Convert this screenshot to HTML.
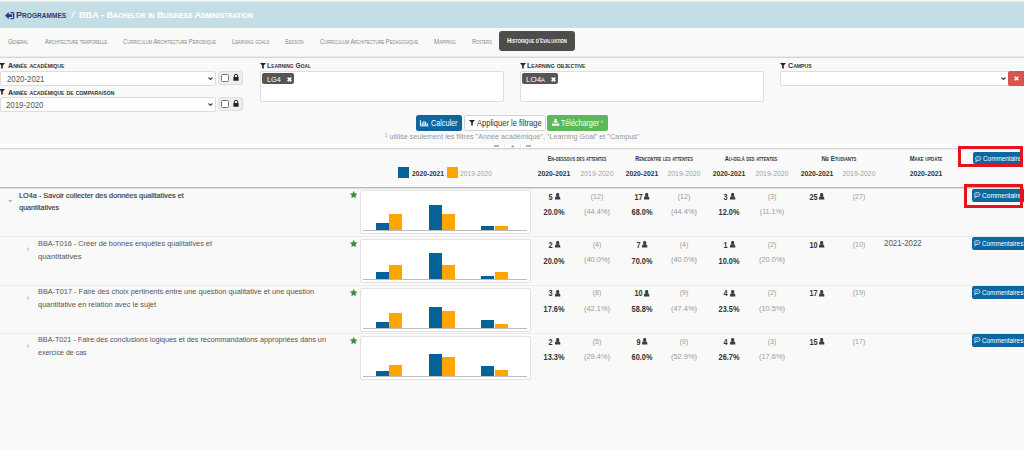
<!DOCTYPE html><html><head><meta charset="utf-8"><style>
*{box-sizing:border-box;margin:0;padding:0}
html,body{width:1024px;height:450px;overflow:hidden;background:#f9f9f9;font-family:"Liberation Sans",sans-serif;color:#555}
.a{position:absolute;white-space:nowrap;line-height:1}
svg{position:absolute;overflow:visible}
</style></head><body><div style="position:absolute;left:0px;top:0px;width:1024px;height:1px;background:#fafafa"></div>
<div style="position:absolute;left:0px;top:1px;width:1024px;height:1px;background:#dfe6e8"></div>
<div style="position:absolute;left:0px;top:2px;width:1024px;height:25.6px;background:#c3dee5"></div>
<svg style="left:4.9px;top:11.8px" width="9.3" height="7.2" viewBox="0 0 9.3 7.2"><path d="M0 3.6 L3.8 0 V2.3 H7.2 V4.9 H3.8 V7.2 Z" fill="#27398a"/><path d="M5.6 0.65 H7.9 Q8.65 0.65 8.65 1.4 V5.8 Q8.65 6.55 7.9 6.55 H5.6" fill="none" stroke="#27398a" stroke-width="1.3"/></svg>
<div class="a" id="t0" style="left:16.00px;top:11.40px;font-size:9.163px;font-weight:700;color:#27398a;transform:scaleX(0.9966);transform-origin:0 0">P<span style="font-size:6.597px">ROGRAMMES</span></div>
<div class="a" id="t1" style="left:71.39px;top:11.41px;font-size:9.350px;font-weight:400;color:#fff;transform:scaleX(1.5558);transform-origin:0 0">/</div>
<div class="a" id="t2" style="left:78.51px;top:11.40px;font-size:9.016px;font-weight:700;color:#fff;-webkit-text-stroke:0.12px #fff;transform:scaleX(1.0099);transform-origin:0 0">BBA - B<span style="font-size:6.492px">ACHELOR</span> <span style="font-size:6.492px">IN</span> B<span style="font-size:6.492px">USINESS</span> A<span style="font-size:6.492px">DMINISTRATION</span></div>
<div style="position:absolute;left:0px;top:56px;width:1024px;height:1px;background:#ebebeb"></div>
<div style="position:absolute;left:0px;top:57px;width:1024px;height:1px;background:#d6d6d6"></div>
<div class="a" id="t3" style="left:8.00px;top:38.51px;font-size:6.786px;color:#858585;transform:scaleX(0.8147);transform-origin:0 0">G<span style="font-size:4.886px">ENERAL</span></div>
<div class="a" id="t4" style="left:44.51px;top:38.51px;font-size:6.786px;color:#858585;transform:scaleX(0.8412);transform-origin:0 0">A<span style="font-size:4.886px">RCHITECTURE</span> <span style="font-size:4.886px">TEMPORELLE</span></div>
<div class="a" id="t5" style="left:122.51px;top:38.51px;font-size:6.786px;color:#858585;transform:scaleX(0.8548);transform-origin:0 0">C<span style="font-size:4.886px">URRICULUM</span> A<span style="font-size:4.886px">RCHITECTURE</span> P<span style="font-size:4.886px">ERIODIQUE</span></div>
<div class="a" id="t6" style="left:231.50px;top:38.51px;font-size:6.786px;color:#858585;transform:scaleX(0.8325);transform-origin:0 0">L<span style="font-size:4.886px">EARNING</span> <span style="font-size:4.886px">GOALS</span></div>
<div class="a" id="t7" style="left:285.24px;top:38.51px;font-size:6.786px;color:#858585;transform:scaleX(0.8097);transform-origin:0 0">S<span style="font-size:4.886px">ESSION</span></div>
<div class="a" id="t8" style="left:319.75px;top:38.51px;font-size:6.786px;color:#858585;transform:scaleX(0.8547);transform-origin:0 0">C<span style="font-size:4.886px">URRICULUM</span> A<span style="font-size:4.886px">RCHITECTURE</span> P<span style="font-size:4.886px">EDAGOGIQUE</span></div>
<div class="a" id="t9" style="left:434.00px;top:38.51px;font-size:6.786px;color:#858585;transform:scaleX(0.8982);transform-origin:0 0">M<span style="font-size:4.886px">APPING</span></div>
<div class="a" id="t10" style="left:471.51px;top:38.51px;font-size:6.786px;color:#858585;transform:scaleX(0.7903);transform-origin:0 0">R<span style="font-size:4.886px">OSTERS</span></div>
<div style="position:absolute;left:499.3px;top:31.2px;width:75.5px;height:20.3px;background:#4d4d4d;border-radius:3px"></div>
<div class="a" id="t11" style="left:507.00px;top:38.31px;font-size:6.844px;font-weight:700;color:#fff;transform:scaleX(0.8547);transform-origin:0 0">H<span style="font-size:4.928px">ISTORIQUE</span> <span style="font-size:4.928px">D</span>'<span style="font-size:4.928px">ÉVALUATION</span></div>
<svg style="left:-1.0px;top:63.0px" width="6" height="5.5" viewBox="0 0 6 5.5"><path d="M0 0 H6 L3.8 2.4 V5.5 H2.2 V2.4 Z" fill="#222"/></svg>
<div class="a" id="t12" style="left:8.01px;top:62.41px;font-size:7.592px;font-weight:700;color:#333;transform:scaleX(0.9414);transform-origin:0 0">A<span style="font-size:5.466px">NNÉE</span> <span style="font-size:5.466px">ACADÉMIQUE</span></div>
<div style="position:absolute;left:0px;top:71.2px;width:216px;height:15px;background:#fff;border:1px solid #ddd;border-radius:2px"></div>
<div class="a" id="t13" style="left:6.50px;top:74.61px;font-size:8.736px;color:#555;transform:scaleX(0.8979);transform-origin:0 0">2020-2021</div>
<svg style="left:208.2px;top:76.6px" width="5" height="3.2" viewBox="0 0 5 3.2"><path d="M0.5 0.5 L2.5 2.5 L4.5 0.5" fill="none" stroke="#444" stroke-width="1.1"/></svg>
<div style="position:absolute;left:218.3px;top:71px;width:25.1px;height:13.5px;background:#eee;border:1px solid #ddd;border-radius:3px"></div>
<div style="position:absolute;left:221px;top:74.2px;width:8px;height:7.7px;background:#fff;border:1px solid #777;border-radius:1.5px"></div>
<svg style="left:233.3px;top:73.8px" width="6" height="7" viewBox="0 0 6 7"><path d="M1.3 3 V2 A1.7 1.7 0 0 1 4.7 2 V3" fill="none" stroke="#222" stroke-width="1"/><rect x="0.4" y="3" width="5.2" height="3.8" rx="0.5" fill="#222"/></svg>
<svg style="left:-1.0px;top:89.4px" width="6" height="5.5" viewBox="0 0 6 5.5"><path d="M0 0 H6 L3.8 2.4 V5.5 H2.2 V2.4 Z" fill="#222"/></svg>
<div class="a" id="t14" style="left:8.01px;top:88.70px;font-size:7.592px;font-weight:700;color:#333;transform:scaleX(0.9420);transform-origin:0 0">A<span style="font-size:5.466px">NNÉE</span> <span style="font-size:5.466px">ACADÉMIQUE</span> <span style="font-size:5.466px">DE</span> <span style="font-size:5.466px">COMPARAISON</span></div>
<div style="position:absolute;left:0px;top:97.3px;width:216px;height:15px;background:#fff;border:1px solid #ddd;border-radius:2px"></div>
<div class="a" id="t15" style="left:6.49px;top:100.81px;font-size:8.736px;color:#555;transform:scaleX(0.8979);transform-origin:0 0">2019-2020</div>
<svg style="left:208.2px;top:102.6px" width="5" height="3.2" viewBox="0 0 5 3.2"><path d="M0.5 0.5 L2.5 2.5 L4.5 0.5" fill="none" stroke="#444" stroke-width="1.1"/></svg>
<div style="position:absolute;left:218.3px;top:97.3px;width:25.1px;height:13.5px;background:#eee;border:1px solid #ddd;border-radius:3px"></div>
<div style="position:absolute;left:221px;top:100.4px;width:8px;height:7.7px;background:#fff;border:1px solid #777;border-radius:1.5px"></div>
<svg style="left:233.3px;top:100px" width="6" height="7" viewBox="0 0 6 7"><path d="M1.3 3 V2 A1.7 1.7 0 0 1 4.7 2 V3" fill="none" stroke="#222" stroke-width="1"/><rect x="0.4" y="3" width="5.2" height="3.8" rx="0.5" fill="#222"/></svg>
<svg style="left:260px;top:63px" width="6" height="5.5" viewBox="0 0 6 5.5"><path d="M0 0 H6 L3.8 2.4 V5.5 H2.2 V2.4 Z" fill="#222"/></svg>
<div class="a" id="t16" style="left:267.48px;top:61.91px;font-size:7.592px;font-weight:700;color:#333;transform:scaleX(0.8920);transform-origin:0 0">L<span style="font-size:5.466px">EARNING</span> G<span style="font-size:5.466px">OAL</span></div>
<div style="position:absolute;left:259.8px;top:71px;width:244px;height:31px;background:#fff;border:1px solid #ddd;border-radius:2px"></div>
<div style="position:absolute;left:261.9px;top:73.1px;width:32px;height:11.4px;background:#555;border-radius:2px"></div>
<div class="a" id="t17" style="left:267.49px;top:75.82px;font-size:8.064px;color:#fff;transform:scaleX(0.9083);transform-origin:0 0">LG4</div>
<svg style="left:287.2px;top:76.6px" width="5" height="5" viewBox="0 0 5 5"><path d="M0.7 0.7 L4.3 4.3 M4.3 0.7 L0.7 4.3" stroke="#fff" stroke-width="1.7"/></svg>
<svg style="left:520.2px;top:63px" width="6" height="5.5" viewBox="0 0 6 5.5"><path d="M0 0 H6 L3.8 2.4 V5.5 H2.2 V2.4 Z" fill="#222"/></svg>
<div class="a" id="t18" style="left:527.00px;top:61.91px;font-size:7.592px;font-weight:700;color:#333;transform:scaleX(0.9296);transform-origin:0 0">L<span style="font-size:5.466px">EARNING</span> <span style="font-size:5.466px">OBJECTIVE</span></div>
<div style="position:absolute;left:520px;top:71px;width:243.8px;height:31px;background:#fff;border:1px solid #ddd;border-radius:2px"></div>
<div style="position:absolute;left:521.9px;top:73.1px;width:36.5px;height:11.4px;background:#555;border-radius:2px"></div>
<div class="a" id="t19" style="left:526.43px;top:75.82px;font-size:8.064px;color:#fff;transform:scaleX(0.9910);transform-origin:0 0">LO4<span style="font-size:5.806px">A</span></div>
<svg style="left:551.2px;top:76.6px" width="5" height="5" viewBox="0 0 5 5"><path d="M0.7 0.7 L4.3 4.3 M4.3 0.7 L0.7 4.3" stroke="#fff" stroke-width="1.7"/></svg>
<svg style="left:780px;top:62.8px" width="6" height="5.5" viewBox="0 0 6 5.5"><path d="M0 0 H6 L3.8 2.4 V5.5 H2.2 V2.4 Z" fill="#222"/></svg>
<div class="a" id="t20" style="left:787.50px;top:61.91px;font-size:7.592px;font-weight:700;color:#333;transform:scaleX(0.9376);transform-origin:0 0">C<span style="font-size:5.466px">AMPUS</span></div>
<div style="position:absolute;left:780.2px;top:71.3px;width:230px;height:14.9px;background:#fff;border:1px solid #ddd;border-radius:2px 0 0 2px"></div>
<svg style="left:1000.6px;top:77px" width="5" height="3.2" viewBox="0 0 5 3.2"><path d="M0.5 0.5 L2.5 2.5 L4.5 0.5" fill="none" stroke="#444" stroke-width="1.1"/></svg>
<div style="position:absolute;left:1008.2px;top:71px;width:16px;height:15.1px;background:#d9534f;border-radius:2px 0 0 2px"></div>
<svg style="left:1013.6px;top:76px" width="5" height="5" viewBox="0 0 5 5"><path d="M0.7 0.7 L4.3 4.3 M4.3 0.7 L0.7 4.3" stroke="#fff" stroke-width="1.5"/></svg>
<div style="position:absolute;left:416px;top:115.3px;width:46px;height:15.3px;background:#0c67a0;border-radius:2.5px"></div>
<svg style="left:420px;top:119.5px" width="8.6" height="6.3" viewBox="0 0 8.6 6.3"><path d="M0.45 0 V5.85 H8.6" fill="none" stroke="#fff" stroke-width="0.9"/><rect x="1.7" y="2.4" width="1.1" height="3.1" fill="#fff"/><rect x="3.4" y="0.9" width="1.1" height="4.6" fill="#fff"/><rect x="5.1" y="1.8" width="1.1" height="3.7" fill="#fff"/><rect x="6.8" y="3.3" width="1.1" height="2.2" fill="#fff"/></svg>
<div class="a" id="t21" style="left:430.50px;top:118.50px;font-size:8.395px;color:#fff;transform:scaleX(0.8634);transform-origin:0 0">Calculer</div>
<div style="position:absolute;left:464.4px;top:115.4px;width:81.2px;height:15.3px;background:#fff;border:1px solid #d3d3d3;border-radius:2.5px"></div>
<svg style="left:469px;top:120px" width="6" height="5.5" viewBox="0 0 6 5.5"><path d="M0 0 H6 L3.8 2.4 V5.5 H2.2 V2.4 Z" fill="#222"/></svg>
<div class="a" id="t22" style="left:476.99px;top:118.50px;font-size:8.400px;color:#333;transform:scaleX(0.9013);transform-origin:0 0">Appliquer le filtrage</div>
<div style="position:absolute;left:547.1px;top:115px;width:60.9px;height:15.9px;background:#5cb85c;border-radius:2px"></div>
<svg style="left:552px;top:118.9px" width="7.3" height="6.8" viewBox="0 0 7.3 6.8"><path d="M2.6 0 H4.7 V2.3 H6.2 L3.65 4.6 L1.1 2.3 H2.6 Z" fill="#fff"/><path d="M0 4.6 H2.2 L3.65 5.6 L5.1 4.6 H7.3 V6.8 H0 Z" fill="#fff"/></svg>
<div class="a" id="t23" style="left:560.50px;top:118.61px;font-size:8.307px;color:#fff;transform:scaleX(0.8595);transform-origin:0 0">Télécharger</div>
<div class="a" id="t24" style="left:600.90px;top:120.00px;font-size:5.500px;color:#fff;transform:scaleX(1.0000);transform-origin:0 0">¹</div>
<div class="a" id="t25" style="left:385.00px;top:132.82px;font-size:8.064px;color:#999;transform:scaleX(0.8964);transform-origin:0 0">¹ utilise seulement les filtres "Année académique", "Learning Goal" et "Campus"</div>
<div style="position:absolute;left:0px;top:143.5px;width:1024px;height:4.5px;background:#fff"></div>
<div style="position:absolute;left:0px;top:148px;width:1024px;height:1px;background:#d8d8d8"></div>
<div style="position:absolute;left:0px;top:149px;width:1024px;height:0.6px;background:#ececec"></div>
<div style="position:absolute;left:494px;top:145.4px;width:4.5px;height:1.4px;background:#b5b5b5"></div>
<svg style="left:510.6px;top:145px" width="3.6" height="2.2" viewBox="0 0 3.6 2.2"><path d="M0 2.2 L1.8 0 L3.6 2.2 Z" fill="#999"/></svg>
<div style="position:absolute;left:526.2px;top:145.4px;width:4.7px;height:1.4px;background:#b5b5b5"></div>
<div style="position:absolute;left:504.4px;top:143.5px;width:0.6px;height:4.5px;background:#e6e6e6"></div>
<div style="position:absolute;left:520px;top:143.5px;width:0.6px;height:4.5px;background:#e6e6e6"></div>
<div style="position:absolute;left:0px;top:149.6px;width:1024px;height:37.4px;background:#fafafa"></div>
<div style="position:absolute;left:0px;top:187px;width:1024px;height:1px;background:#b8b8b8"></div>
<div style="position:absolute;left:0px;top:188px;width:1024px;height:0.7px;background:#dedede"></div>
<div style="position:absolute;left:398.4px;top:167.3px;width:10.8px;height:10.5px;background:#036399"></div>
<div class="a" id="t26" style="left:412.00px;top:169.81px;font-size:7.504px;font-weight:700;color:#333;transform:scaleX(0.8932);transform-origin:0 0">2020-2021</div>
<div style="position:absolute;left:446.9px;top:167.3px;width:10.8px;height:10.5px;background:#ffa500"></div>
<div class="a" id="t27" style="left:460.00px;top:169.81px;font-size:7.728px;color:#a0a0a0;transform:scaleX(0.8658);transform-origin:0 0">2019-2020</div>
<div class="a" id="t28" style="left:516.50px;width:120px;text-align:center;top:155.60px;font-size:6.611px;font-weight:700;color:#333;transform:scaleX(0.8210);transform-origin:50% 0">E<span style="font-size:4.760px">N</span>-<span style="font-size:4.760px">DESSOUS</span> <span style="font-size:4.760px">DES</span> <span style="font-size:4.760px">ATTENTES</span></div>
<div class="a" id="t29" style="left:603.50px;width:120px;text-align:center;top:155.60px;font-size:6.611px;font-weight:700;color:#333;transform:scaleX(0.8343);transform-origin:50% 0">R<span style="font-size:4.760px">ENCONTRE</span> <span style="font-size:4.760px">LES</span> <span style="font-size:4.760px">ATTENTES</span></div>
<div class="a" id="t30" style="left:691.00px;width:120px;text-align:center;top:155.60px;font-size:6.611px;font-weight:700;color:#333;transform:scaleX(0.8547);transform-origin:50% 0">A<span style="font-size:4.760px">U</span>-<span style="font-size:4.760px">DELÀ</span> <span style="font-size:4.760px">DES</span> <span style="font-size:4.760px">ATTENTES</span></div>
<div class="a" id="t31" style="left:779.00px;width:120px;text-align:center;top:155.60px;font-size:6.611px;font-weight:700;color:#333;transform:scaleX(0.9081);transform-origin:50% 0">N<span style="font-size:4.760px">B</span> E<span style="font-size:4.760px">TUDIANTS</span></div>
<div class="a" id="t32" style="left:866.00px;width:120px;text-align:center;top:155.60px;font-size:6.611px;font-weight:700;color:#333;transform:scaleX(0.8927);transform-origin:50% 0">M<span style="font-size:4.760px">AKE</span> <span style="font-size:4.760px">UPDATE</span></div>
<div class="a" id="t33" style="left:494.35px;width:120px;text-align:center;top:170.01px;font-size:7.504px;font-weight:700;color:#333;transform:scaleX(0.9041);transform-origin:50% 0">2020-2021</div>
<div class="a" id="t34" style="left:536.90px;width:120px;text-align:center;top:170.01px;font-size:7.728px;color:#a0a0a0;transform:scaleX(0.8987);transform-origin:50% 0">2019-2020</div>
<div class="a" id="t35" style="left:581.80px;width:120px;text-align:center;top:170.01px;font-size:7.504px;font-weight:700;color:#333;transform:scaleX(0.9041);transform-origin:50% 0">2020-2021</div>
<div class="a" id="t36" style="left:624.35px;width:120px;text-align:center;top:170.01px;font-size:7.728px;color:#a0a0a0;transform:scaleX(0.8987);transform-origin:50% 0">2019-2020</div>
<div class="a" id="t37" style="left:669.25px;width:120px;text-align:center;top:170.01px;font-size:7.504px;font-weight:700;color:#333;transform:scaleX(0.9041);transform-origin:50% 0">2020-2021</div>
<div class="a" id="t38" style="left:711.80px;width:120px;text-align:center;top:170.01px;font-size:7.728px;color:#a0a0a0;transform:scaleX(0.8987);transform-origin:50% 0">2019-2020</div>
<div class="a" id="t39" style="left:756.70px;width:120px;text-align:center;top:170.01px;font-size:7.504px;font-weight:700;color:#333;transform:scaleX(0.9041);transform-origin:50% 0">2020-2021</div>
<div class="a" id="t40" style="left:799.25px;width:120px;text-align:center;top:170.01px;font-size:7.728px;color:#a0a0a0;transform:scaleX(0.8987);transform-origin:50% 0">2019-2020</div>
<div class="a" id="t41" style="left:865.80px;width:120px;text-align:center;top:170.01px;font-size:7.504px;font-weight:700;color:#333;transform:scaleX(0.9105);transform-origin:50% 0">2020-2021</div>
<div style="position:absolute;left:973px;top:152.3px;width:60px;height:12.1px;background:#0b69a0;border-radius:2px"></div>
<svg style="left:975.0px;top:155.70000000000002px" width="6.4" height="6.2" viewBox="0 0 6.4 6.2"><ellipse cx="3.2" cy="2.5" rx="2.8" ry="2.1" fill="none" stroke="rgba(255,255,255,0.85)" stroke-width="0.75"/><path d="M1.2 4.2 L0.6 5.9 L2.6 4.6" fill="none" stroke="rgba(255,255,255,0.85)" stroke-width="0.7"/><path d="M1.7 2.1 H4.7 M1.7 3.0 H4.7" stroke="rgba(255,255,255,0.6)" stroke-width="0.5"/></svg>
<div class="a" id="t42" style="left:983.00px;top:155.00px;font-size:7.056px;color:#fff;transform:scaleX(0.9027);transform-origin:0 0">Commentaire</div>
<svg style="left:8px;top:200px" width="4.5" height="2.5" viewBox="0 0 4.5 2.5"><path d="M0 0 H4.5 L2.25 2.5 Z" fill="#bbb"/></svg>
<div class="a" id="t43" style="left:18.97px;top:192.71px;font-size:7.100px;font-weight:400;color:#3f3f3f;-webkit-text-stroke:0.18px #3f3f3f;transform:scaleX(1.0290);transform-origin:0 0">LO4a - Savoir collecter des données qualitatives et</div>
<div class="a" id="t44" style="left:19.20px;top:205.31px;font-size:7.100px;font-weight:400;color:#3f3f3f;-webkit-text-stroke:0.18px #3f3f3f;transform:scaleX(1.0000);transform-origin:0 0">quantitatives</div>
<svg style="left:350.0px;top:190.6px" width="7.4" height="7.4" viewBox="0 0 24 24"><path d="M12.0 1.1 L15.38 7.95 L22.94 9.05 L17.47 14.38 L18.76 21.9 L12.0 18.35 L5.24 21.9 L6.53 14.38 L1.06 9.05 L8.62 7.95 Z" fill="#3a8a3e" stroke="#3a8a3e" stroke-width="1.2" stroke-linejoin="round"/></svg>
<div style="position:absolute;left:360px;top:190px;width:171px;height:44px;background:#fff;border:1px solid #e2e2e2;border-radius:2px"></div>
<div style="position:absolute;left:363px;top:230.3px;width:164px;height:1px;background:#bbb"></div>
<div style="position:absolute;left:376px;top:222.9px;width:13.2px;height:7.4px;background:#036399"></div>
<div style="position:absolute;left:389.2px;top:213.872px;width:13.2px;height:16.428px;background:#ffa500"></div>
<div style="position:absolute;left:429px;top:205.14000000000001px;width:13.2px;height:25.16px;background:#036399"></div>
<div style="position:absolute;left:442.2px;top:213.872px;width:13.2px;height:16.428px;background:#ffa500"></div>
<div style="position:absolute;left:481.3px;top:225.86px;width:13.2px;height:4.4399999999999995px;background:#036399"></div>
<div style="position:absolute;left:494.5px;top:226.193px;width:13.2px;height:4.107px;background:#ffa500"></div>
<div class="a" id="t45" style="left:494.35px;width:120px;text-align:center;top:193.91px;font-size:8.176px;font-weight:700;color:#333;transform:scaleX(0.8929);transform-origin:50% 0">5<span style="display:inline-block;width:7.62px"></span></div>
<svg style="left:554.8000000000001px;top:193.4px" width="5.3" height="6.6" viewBox="0 0 5.3 6.6"><rect x="1.1" y="0" width="3.1" height="3.9" rx="1.4" fill="#3d3d3d"/><path d="M0 6.6 V5 Q0 3.6 1.4 3.6 H3.9 Q5.3 3.6 5.3 5 V6.6 Z" fill="#3d3d3d"/></svg>
<div class="a" id="t46" style="left:536.90px;width:120px;text-align:center;top:193.01px;font-size:7.840px;color:#999;transform:scaleX(0.8929);transform-origin:50% 0">(12)</div>
<div class="a" id="t47" style="left:494.35px;width:120px;text-align:center;top:209.41px;font-size:8.176px;font-weight:700;color:#333;transform:scaleX(0.9043);transform-origin:50% 0">20.0%</div>
<div class="a" id="t48" style="left:536.90px;width:120px;text-align:center;top:208.10px;font-size:7.840px;color:#999;transform:scaleX(0.9461);transform-origin:50% 0">(44.4%)</div>
<div class="a" id="t49" style="left:581.80px;width:120px;text-align:center;top:193.91px;font-size:8.176px;font-weight:700;color:#333;transform:scaleX(0.8929);transform-origin:50% 0">17<span style="display:inline-block;width:7.62px"></span></div>
<svg style="left:644.2500000000001px;top:193.4px" width="5.3" height="6.6" viewBox="0 0 5.3 6.6"><rect x="1.1" y="0" width="3.1" height="3.9" rx="1.4" fill="#3d3d3d"/><path d="M0 6.6 V5 Q0 3.6 1.4 3.6 H3.9 Q5.3 3.6 5.3 5 V6.6 Z" fill="#3d3d3d"/></svg>
<div class="a" id="t50" style="left:624.35px;width:120px;text-align:center;top:193.01px;font-size:7.840px;color:#999;transform:scaleX(0.8929);transform-origin:50% 0">(12)</div>
<div class="a" id="t51" style="left:581.80px;width:120px;text-align:center;top:209.41px;font-size:8.176px;font-weight:700;color:#333;transform:scaleX(0.9043);transform-origin:50% 0">68.0%</div>
<div class="a" id="t52" style="left:624.35px;width:120px;text-align:center;top:208.10px;font-size:7.840px;color:#999;transform:scaleX(0.9461);transform-origin:50% 0">(44.4%)</div>
<div class="a" id="t53" style="left:669.25px;width:120px;text-align:center;top:193.91px;font-size:8.176px;font-weight:700;color:#333;transform:scaleX(0.8929);transform-origin:50% 0">3<span style="display:inline-block;width:7.62px"></span></div>
<svg style="left:729.7px;top:193.4px" width="5.3" height="6.6" viewBox="0 0 5.3 6.6"><rect x="1.1" y="0" width="3.1" height="3.9" rx="1.4" fill="#3d3d3d"/><path d="M0 6.6 V5 Q0 3.6 1.4 3.6 H3.9 Q5.3 3.6 5.3 5 V6.6 Z" fill="#3d3d3d"/></svg>
<div class="a" id="t54" style="left:711.80px;width:120px;text-align:center;top:193.01px;font-size:7.840px;color:#999;transform:scaleX(0.8929);transform-origin:50% 0">(3)</div>
<div class="a" id="t55" style="left:669.25px;width:120px;text-align:center;top:209.41px;font-size:8.176px;font-weight:700;color:#333;transform:scaleX(0.9023);transform-origin:50% 0">12.0%</div>
<div class="a" id="t56" style="left:711.80px;width:120px;text-align:center;top:208.10px;font-size:7.840px;color:#999;transform:scaleX(0.9097);transform-origin:50% 0">(11.1%)</div>
<div class="a" id="t57" style="left:756.70px;width:120px;text-align:center;top:193.91px;font-size:8.176px;font-weight:700;color:#333;transform:scaleX(0.8929);transform-origin:50% 0">25<span style="display:inline-block;width:7.62px"></span></div>
<svg style="left:819.1500000000001px;top:193.4px" width="5.3" height="6.6" viewBox="0 0 5.3 6.6"><rect x="1.1" y="0" width="3.1" height="3.9" rx="1.4" fill="#3d3d3d"/><path d="M0 6.6 V5 Q0 3.6 1.4 3.6 H3.9 Q5.3 3.6 5.3 5 V6.6 Z" fill="#3d3d3d"/></svg>
<div class="a" id="t58" style="left:799.25px;width:120px;text-align:center;top:193.01px;font-size:7.840px;color:#999;transform:scaleX(0.8929);transform-origin:50% 0">(27)</div>
<div style="position:absolute;left:971.7px;top:188.8px;width:60px;height:12.9px;background:#0b69a0;border-radius:2px"></div>
<svg style="left:973.7px;top:192.20000000000002px" width="6.4" height="6.2" viewBox="0 0 6.4 6.2"><ellipse cx="3.2" cy="2.5" rx="2.8" ry="2.1" fill="none" stroke="rgba(255,255,255,0.85)" stroke-width="0.75"/><path d="M1.2 4.2 L0.6 5.9 L2.6 4.6" fill="none" stroke="rgba(255,255,255,0.85)" stroke-width="0.7"/><path d="M1.7 2.1 H4.7 M1.7 3.0 H4.7" stroke="rgba(255,255,255,0.6)" stroke-width="0.5"/></svg>
<div class="a" id="t59" style="left:981.50px;top:191.91px;font-size:7.056px;color:#fff;transform:scaleX(0.9309);transform-origin:0 0">Commentaire</div>
<div style="position:absolute;left:0px;top:236px;width:1024px;height:1px;background:#ebebeb"></div>
<svg style="left:27.3px;top:247.3px" width="2.7" height="4.2" viewBox="0 0 2.7 4.2"><path d="M0 0 V4.2 L2.7 2.1 Z" fill="#ccc"/></svg>
<div class="a" id="t60" style="left:37.50px;top:239.82px;font-size:7.975px;font-weight:400;color:#555;transform:scaleX(0.9197);transform-origin:0 0">BBA-T016 - Créer de bonnes enquêtes qualitatives et</div>
<div class="a" id="t61" style="left:38.00px;top:252.71px;font-size:7.975px;font-weight:400;color:#555;transform:scaleX(0.9730);transform-origin:0 0">quantitatives</div>
<svg style="left:350.0px;top:239.6px" width="7.4" height="7.4" viewBox="0 0 24 24"><path d="M12.0 1.1 L15.38 7.95 L22.94 9.05 L17.47 14.38 L18.76 21.9 L12.0 18.35 L5.24 21.9 L6.53 14.38 L1.06 9.05 L8.62 7.95 Z" fill="#3a8a3e" stroke="#3a8a3e" stroke-width="1.2" stroke-linejoin="round"/></svg>
<div style="position:absolute;left:360px;top:239px;width:171px;height:44px;background:#fff;border:1px solid #e2e2e2;border-radius:2px"></div>
<div style="position:absolute;left:363px;top:279.3px;width:164px;height:1px;background:#bbb"></div>
<div style="position:absolute;left:376px;top:271.90000000000003px;width:13.2px;height:7.4px;background:#036399"></div>
<div style="position:absolute;left:389.2px;top:264.5px;width:13.2px;height:14.8px;background:#ffa500"></div>
<div style="position:absolute;left:429px;top:253.4px;width:13.2px;height:25.9px;background:#036399"></div>
<div style="position:absolute;left:442.2px;top:264.5px;width:13.2px;height:14.8px;background:#ffa500"></div>
<div style="position:absolute;left:481.3px;top:275.6px;width:13.2px;height:3.7px;background:#036399"></div>
<div style="position:absolute;left:494.5px;top:271.90000000000003px;width:13.2px;height:7.4px;background:#ffa500"></div>
<div class="a" id="t62" style="left:494.35px;width:120px;text-align:center;top:241.82px;font-size:8.176px;font-weight:700;color:#333;transform:scaleX(0.8929);transform-origin:50% 0">2<span style="display:inline-block;width:7.62px"></span></div>
<svg style="left:554.8000000000001px;top:241.3px" width="5.3" height="6.6" viewBox="0 0 5.3 6.6"><rect x="1.1" y="0" width="3.1" height="3.9" rx="1.4" fill="#3d3d3d"/><path d="M0 6.6 V5 Q0 3.6 1.4 3.6 H3.9 Q5.3 3.6 5.3 5 V6.6 Z" fill="#3d3d3d"/></svg>
<div class="a" id="t63" style="left:536.90px;width:120px;text-align:center;top:240.91px;font-size:7.840px;color:#999;transform:scaleX(0.8929);transform-origin:50% 0">(4)</div>
<div class="a" id="t64" style="left:494.35px;width:120px;text-align:center;top:257.50px;font-size:8.176px;font-weight:700;color:#333;transform:scaleX(0.9043);transform-origin:50% 0">20.0%</div>
<div class="a" id="t65" style="left:536.90px;width:120px;text-align:center;top:256.21px;font-size:7.840px;color:#999;transform:scaleX(0.9461);transform-origin:50% 0">(40.0%)</div>
<div class="a" id="t66" style="left:581.80px;width:120px;text-align:center;top:241.82px;font-size:8.176px;font-weight:700;color:#333;transform:scaleX(0.8929);transform-origin:50% 0">7<span style="display:inline-block;width:7.62px"></span></div>
<svg style="left:642.2500000000001px;top:241.3px" width="5.3" height="6.6" viewBox="0 0 5.3 6.6"><rect x="1.1" y="0" width="3.1" height="3.9" rx="1.4" fill="#3d3d3d"/><path d="M0 6.6 V5 Q0 3.6 1.4 3.6 H3.9 Q5.3 3.6 5.3 5 V6.6 Z" fill="#3d3d3d"/></svg>
<div class="a" id="t67" style="left:624.35px;width:120px;text-align:center;top:240.91px;font-size:7.840px;color:#999;transform:scaleX(0.8929);transform-origin:50% 0">(4)</div>
<div class="a" id="t68" style="left:581.80px;width:120px;text-align:center;top:257.50px;font-size:8.176px;font-weight:700;color:#333;transform:scaleX(0.9043);transform-origin:50% 0">70.0%</div>
<div class="a" id="t69" style="left:624.35px;width:120px;text-align:center;top:256.21px;font-size:7.840px;color:#999;transform:scaleX(0.9461);transform-origin:50% 0">(40.0%)</div>
<div class="a" id="t70" style="left:669.25px;width:120px;text-align:center;top:241.82px;font-size:8.176px;font-weight:700;color:#333;transform:scaleX(0.8929);transform-origin:50% 0">1<span style="display:inline-block;width:7.62px"></span></div>
<svg style="left:729.7px;top:241.3px" width="5.3" height="6.6" viewBox="0 0 5.3 6.6"><rect x="1.1" y="0" width="3.1" height="3.9" rx="1.4" fill="#3d3d3d"/><path d="M0 6.6 V5 Q0 3.6 1.4 3.6 H3.9 Q5.3 3.6 5.3 5 V6.6 Z" fill="#3d3d3d"/></svg>
<div class="a" id="t71" style="left:711.80px;width:120px;text-align:center;top:240.91px;font-size:7.840px;color:#999;transform:scaleX(0.8929);transform-origin:50% 0">(2)</div>
<div class="a" id="t72" style="left:669.25px;width:120px;text-align:center;top:257.50px;font-size:8.176px;font-weight:700;color:#333;transform:scaleX(0.9023);transform-origin:50% 0">10.0%</div>
<div class="a" id="t73" style="left:711.80px;width:120px;text-align:center;top:256.21px;font-size:7.840px;color:#999;transform:scaleX(0.9461);transform-origin:50% 0">(20.0%)</div>
<div class="a" id="t74" style="left:756.70px;width:120px;text-align:center;top:241.82px;font-size:8.176px;font-weight:700;color:#333;transform:scaleX(0.8929);transform-origin:50% 0">10<span style="display:inline-block;width:7.62px"></span></div>
<svg style="left:819.1500000000001px;top:241.3px" width="5.3" height="6.6" viewBox="0 0 5.3 6.6"><rect x="1.1" y="0" width="3.1" height="3.9" rx="1.4" fill="#3d3d3d"/><path d="M0 6.6 V5 Q0 3.6 1.4 3.6 H3.9 Q5.3 3.6 5.3 5 V6.6 Z" fill="#3d3d3d"/></svg>
<div class="a" id="t75" style="left:799.25px;width:120px;text-align:center;top:240.91px;font-size:7.840px;color:#999;transform:scaleX(0.8929);transform-origin:50% 0">(10)</div>
<div class="a" id="t76" style="left:883.50px;top:238.72px;font-size:8.736px;color:#555;transform:scaleX(0.9025);transform-origin:0 0">2021-2022</div>
<div style="position:absolute;left:971.5px;top:237px;width:60px;height:12.8px;background:#0b69a0;border-radius:2px"></div>
<svg style="left:973.5px;top:240.4px" width="6.4" height="6.2" viewBox="0 0 6.4 6.2"><ellipse cx="3.2" cy="2.5" rx="2.8" ry="2.1" fill="none" stroke="rgba(255,255,255,0.85)" stroke-width="0.75"/><path d="M1.2 4.2 L0.6 5.9 L2.6 4.6" fill="none" stroke="rgba(255,255,255,0.85)" stroke-width="0.7"/><path d="M1.7 2.1 H4.7 M1.7 3.0 H4.7" stroke="rgba(255,255,255,0.6)" stroke-width="0.5"/></svg>
<div class="a" id="t77" style="left:981.50px;top:240.00px;font-size:7.056px;color:#fff;transform:scaleX(0.9016);transform-origin:0 0">Commentaires</div>
<div style="position:absolute;left:0px;top:285px;width:1024px;height:1px;background:#ebebeb"></div>
<svg style="left:27.3px;top:296.3px" width="2.7" height="4.2" viewBox="0 0 2.7 4.2"><path d="M0 0 V4.2 L2.7 2.1 Z" fill="#ccc"/></svg>
<div class="a" id="t78" style="left:37.50px;top:288.41px;font-size:7.975px;font-weight:400;color:#555;transform:scaleX(0.9265);transform-origin:0 0">BBA-T017 - Faire des choix pertinents entre une question qualitative et une question</div>
<div class="a" id="t79" style="left:37.50px;top:301.32px;font-size:7.975px;font-weight:400;color:#555;transform:scaleX(0.9313);transform-origin:0 0">quantitative en relation avec le sujet</div>
<svg style="left:350.0px;top:288.6px" width="7.4" height="7.4" viewBox="0 0 24 24"><path d="M12.0 1.1 L15.38 7.95 L22.94 9.05 L17.47 14.38 L18.76 21.9 L12.0 18.35 L5.24 21.9 L6.53 14.38 L1.06 9.05 L8.62 7.95 Z" fill="#3a8a3e" stroke="#3a8a3e" stroke-width="1.2" stroke-linejoin="round"/></svg>
<div style="position:absolute;left:360px;top:288px;width:171px;height:44px;background:#fff;border:1px solid #e2e2e2;border-radius:2px"></div>
<div style="position:absolute;left:363px;top:328.3px;width:164px;height:1px;background:#bbb"></div>
<div style="position:absolute;left:376px;top:321.788px;width:13.2px;height:6.5120000000000005px;background:#036399"></div>
<div style="position:absolute;left:389.2px;top:312.723px;width:13.2px;height:15.577px;background:#ffa500"></div>
<div style="position:absolute;left:429px;top:306.544px;width:13.2px;height:21.756px;background:#036399"></div>
<div style="position:absolute;left:442.2px;top:310.762px;width:13.2px;height:17.538px;background:#ffa500"></div>
<div style="position:absolute;left:481.3px;top:319.605px;width:13.2px;height:8.695px;background:#036399"></div>
<div style="position:absolute;left:494.5px;top:324.415px;width:13.2px;height:3.885px;background:#ffa500"></div>
<div class="a" id="t80" style="left:494.35px;width:120px;text-align:center;top:290.21px;font-size:8.176px;font-weight:700;color:#333;transform:scaleX(0.8929);transform-origin:50% 0">3<span style="display:inline-block;width:7.62px"></span></div>
<svg style="left:554.8000000000001px;top:289.7px" width="5.3" height="6.6" viewBox="0 0 5.3 6.6"><rect x="1.1" y="0" width="3.1" height="3.9" rx="1.4" fill="#3d3d3d"/><path d="M0 6.6 V5 Q0 3.6 1.4 3.6 H3.9 Q5.3 3.6 5.3 5 V6.6 Z" fill="#3d3d3d"/></svg>
<div class="a" id="t81" style="left:536.90px;width:120px;text-align:center;top:289.30px;font-size:7.840px;color:#999;transform:scaleX(0.8929);transform-origin:50% 0">(8)</div>
<div class="a" id="t82" style="left:494.35px;width:120px;text-align:center;top:306.21px;font-size:8.176px;font-weight:700;color:#333;transform:scaleX(0.9023);transform-origin:50% 0">17.6%</div>
<div class="a" id="t83" style="left:536.90px;width:120px;text-align:center;top:304.91px;font-size:7.840px;color:#999;transform:scaleX(0.9461);transform-origin:50% 0">(42.1%)</div>
<div class="a" id="t84" style="left:581.80px;width:120px;text-align:center;top:290.21px;font-size:8.176px;font-weight:700;color:#333;transform:scaleX(0.8929);transform-origin:50% 0">10<span style="display:inline-block;width:7.62px"></span></div>
<svg style="left:644.2500000000001px;top:289.7px" width="5.3" height="6.6" viewBox="0 0 5.3 6.6"><rect x="1.1" y="0" width="3.1" height="3.9" rx="1.4" fill="#3d3d3d"/><path d="M0 6.6 V5 Q0 3.6 1.4 3.6 H3.9 Q5.3 3.6 5.3 5 V6.6 Z" fill="#3d3d3d"/></svg>
<div class="a" id="t85" style="left:624.35px;width:120px;text-align:center;top:289.30px;font-size:7.840px;color:#999;transform:scaleX(0.8929);transform-origin:50% 0">(9)</div>
<div class="a" id="t86" style="left:581.80px;width:120px;text-align:center;top:306.21px;font-size:8.176px;font-weight:700;color:#333;transform:scaleX(0.9023);transform-origin:50% 0">58.8%</div>
<div class="a" id="t87" style="left:624.35px;width:120px;text-align:center;top:304.91px;font-size:7.840px;color:#999;transform:scaleX(0.9461);transform-origin:50% 0">(47.4%)</div>
<div class="a" id="t88" style="left:669.25px;width:120px;text-align:center;top:290.21px;font-size:8.176px;font-weight:700;color:#333;transform:scaleX(0.8929);transform-origin:50% 0">4<span style="display:inline-block;width:7.62px"></span></div>
<svg style="left:729.7px;top:289.7px" width="5.3" height="6.6" viewBox="0 0 5.3 6.6"><rect x="1.1" y="0" width="3.1" height="3.9" rx="1.4" fill="#3d3d3d"/><path d="M0 6.6 V5 Q0 3.6 1.4 3.6 H3.9 Q5.3 3.6 5.3 5 V6.6 Z" fill="#3d3d3d"/></svg>
<div class="a" id="t89" style="left:711.80px;width:120px;text-align:center;top:289.30px;font-size:7.840px;color:#999;transform:scaleX(0.8929);transform-origin:50% 0">(2)</div>
<div class="a" id="t90" style="left:669.25px;width:120px;text-align:center;top:306.21px;font-size:8.176px;font-weight:700;color:#333;transform:scaleX(0.9043);transform-origin:50% 0">23.5%</div>
<div class="a" id="t91" style="left:711.80px;width:120px;text-align:center;top:304.91px;font-size:7.840px;color:#999;transform:scaleX(0.9461);transform-origin:50% 0">(10.5%)</div>
<div class="a" id="t92" style="left:756.70px;width:120px;text-align:center;top:290.21px;font-size:8.176px;font-weight:700;color:#333;transform:scaleX(0.8929);transform-origin:50% 0">17<span style="display:inline-block;width:7.62px"></span></div>
<svg style="left:819.1500000000001px;top:289.7px" width="5.3" height="6.6" viewBox="0 0 5.3 6.6"><rect x="1.1" y="0" width="3.1" height="3.9" rx="1.4" fill="#3d3d3d"/><path d="M0 6.6 V5 Q0 3.6 1.4 3.6 H3.9 Q5.3 3.6 5.3 5 V6.6 Z" fill="#3d3d3d"/></svg>
<div class="a" id="t93" style="left:799.25px;width:120px;text-align:center;top:289.30px;font-size:7.840px;color:#999;transform:scaleX(0.8929);transform-origin:50% 0">(19)</div>
<div style="position:absolute;left:971.5px;top:286px;width:60px;height:12.8px;background:#0b69a0;border-radius:2px"></div>
<svg style="left:973.5px;top:289.4px" width="6.4" height="6.2" viewBox="0 0 6.4 6.2"><ellipse cx="3.2" cy="2.5" rx="2.8" ry="2.1" fill="none" stroke="rgba(255,255,255,0.85)" stroke-width="0.75"/><path d="M1.2 4.2 L0.6 5.9 L2.6 4.6" fill="none" stroke="rgba(255,255,255,0.85)" stroke-width="0.7"/><path d="M1.7 2.1 H4.7 M1.7 3.0 H4.7" stroke="rgba(255,255,255,0.6)" stroke-width="0.5"/></svg>
<div class="a" id="t94" style="left:981.50px;top:289.00px;font-size:7.056px;color:#fff;transform:scaleX(0.9016);transform-origin:0 0">Commentaires</div>
<div style="position:absolute;left:0px;top:333px;width:1024px;height:1px;background:#ebebeb"></div>
<svg style="left:27.3px;top:344.3px" width="2.7" height="4.2" viewBox="0 0 2.7 4.2"><path d="M0 0 V4.2 L2.7 2.1 Z" fill="#ccc"/></svg>
<div class="a" id="t95" style="left:37.50px;top:336.32px;font-size:7.975px;font-weight:400;color:#555;transform:scaleX(0.9078);transform-origin:0 0">BBA-T021 - Faire des conclusions logiques et des recommandations appropriées dans un</div>
<div class="a" id="t96" style="left:37.51px;top:348.82px;font-size:7.975px;font-weight:400;color:#555;transform:scaleX(0.8765);transform-origin:0 0">exercice de cas</div>
<svg style="left:350.0px;top:336.6px" width="7.4" height="7.4" viewBox="0 0 24 24"><path d="M12.0 1.1 L15.38 7.95 L22.94 9.05 L17.47 14.38 L18.76 21.9 L12.0 18.35 L5.24 21.9 L6.53 14.38 L1.06 9.05 L8.62 7.95 Z" fill="#3a8a3e" stroke="#3a8a3e" stroke-width="1.2" stroke-linejoin="round"/></svg>
<div style="position:absolute;left:360px;top:336px;width:171px;height:44px;background:#fff;border:1px solid #e2e2e2;border-radius:2px"></div>
<div style="position:absolute;left:363px;top:376.3px;width:164px;height:1px;background:#bbb"></div>
<div style="position:absolute;left:376px;top:371.379px;width:13.2px;height:4.921px;background:#036399"></div>
<div style="position:absolute;left:389.2px;top:365.422px;width:13.2px;height:10.878px;background:#ffa500"></div>
<div style="position:absolute;left:429px;top:354.1px;width:13.2px;height:22.2px;background:#036399"></div>
<div style="position:absolute;left:442.2px;top:356.72700000000003px;width:13.2px;height:19.573px;background:#ffa500"></div>
<div style="position:absolute;left:481.3px;top:366.421px;width:13.2px;height:9.879px;background:#036399"></div>
<div style="position:absolute;left:494.5px;top:369.788px;width:13.2px;height:6.5120000000000005px;background:#ffa500"></div>
<div class="a" id="t97" style="left:494.35px;width:120px;text-align:center;top:338.82px;font-size:8.176px;font-weight:700;color:#333;transform:scaleX(0.8929);transform-origin:50% 0">2<span style="display:inline-block;width:7.62px"></span></div>
<svg style="left:554.8000000000001px;top:338.3px" width="5.3" height="6.6" viewBox="0 0 5.3 6.6"><rect x="1.1" y="0" width="3.1" height="3.9" rx="1.4" fill="#3d3d3d"/><path d="M0 6.6 V5 Q0 3.6 1.4 3.6 H3.9 Q5.3 3.6 5.3 5 V6.6 Z" fill="#3d3d3d"/></svg>
<div class="a" id="t98" style="left:536.90px;width:120px;text-align:center;top:337.91px;font-size:7.840px;color:#999;transform:scaleX(0.8929);transform-origin:50% 0">(5)</div>
<div class="a" id="t99" style="left:494.35px;width:120px;text-align:center;top:354.21px;font-size:8.176px;font-weight:700;color:#333;transform:scaleX(0.9023);transform-origin:50% 0">13.3%</div>
<div class="a" id="t100" style="left:536.90px;width:120px;text-align:center;top:352.91px;font-size:7.840px;color:#999;transform:scaleX(0.9461);transform-origin:50% 0">(29.4%)</div>
<div class="a" id="t101" style="left:581.80px;width:120px;text-align:center;top:338.82px;font-size:8.176px;font-weight:700;color:#333;transform:scaleX(0.8929);transform-origin:50% 0">9<span style="display:inline-block;width:7.62px"></span></div>
<svg style="left:642.2500000000001px;top:338.3px" width="5.3" height="6.6" viewBox="0 0 5.3 6.6"><rect x="1.1" y="0" width="3.1" height="3.9" rx="1.4" fill="#3d3d3d"/><path d="M0 6.6 V5 Q0 3.6 1.4 3.6 H3.9 Q5.3 3.6 5.3 5 V6.6 Z" fill="#3d3d3d"/></svg>
<div class="a" id="t102" style="left:624.35px;width:120px;text-align:center;top:337.91px;font-size:7.840px;color:#999;transform:scaleX(0.8929);transform-origin:50% 0">(9)</div>
<div class="a" id="t103" style="left:581.80px;width:120px;text-align:center;top:354.21px;font-size:8.176px;font-weight:700;color:#333;transform:scaleX(0.9043);transform-origin:50% 0">60.0%</div>
<div class="a" id="t104" style="left:624.35px;width:120px;text-align:center;top:352.91px;font-size:7.840px;color:#999;transform:scaleX(0.9461);transform-origin:50% 0">(52.9%)</div>
<div class="a" id="t105" style="left:669.25px;width:120px;text-align:center;top:338.82px;font-size:8.176px;font-weight:700;color:#333;transform:scaleX(0.8929);transform-origin:50% 0">4<span style="display:inline-block;width:7.62px"></span></div>
<svg style="left:729.7px;top:338.3px" width="5.3" height="6.6" viewBox="0 0 5.3 6.6"><rect x="1.1" y="0" width="3.1" height="3.9" rx="1.4" fill="#3d3d3d"/><path d="M0 6.6 V5 Q0 3.6 1.4 3.6 H3.9 Q5.3 3.6 5.3 5 V6.6 Z" fill="#3d3d3d"/></svg>
<div class="a" id="t106" style="left:711.80px;width:120px;text-align:center;top:337.91px;font-size:7.840px;color:#999;transform:scaleX(0.8929);transform-origin:50% 0">(3)</div>
<div class="a" id="t107" style="left:669.25px;width:120px;text-align:center;top:354.21px;font-size:8.176px;font-weight:700;color:#333;transform:scaleX(0.9043);transform-origin:50% 0">26.7%</div>
<div class="a" id="t108" style="left:711.80px;width:120px;text-align:center;top:352.91px;font-size:7.840px;color:#999;transform:scaleX(0.9461);transform-origin:50% 0">(17.6%)</div>
<div class="a" id="t109" style="left:756.70px;width:120px;text-align:center;top:338.82px;font-size:8.176px;font-weight:700;color:#333;transform:scaleX(0.8929);transform-origin:50% 0">15<span style="display:inline-block;width:7.62px"></span></div>
<svg style="left:819.1500000000001px;top:338.3px" width="5.3" height="6.6" viewBox="0 0 5.3 6.6"><rect x="1.1" y="0" width="3.1" height="3.9" rx="1.4" fill="#3d3d3d"/><path d="M0 6.6 V5 Q0 3.6 1.4 3.6 H3.9 Q5.3 3.6 5.3 5 V6.6 Z" fill="#3d3d3d"/></svg>
<div class="a" id="t110" style="left:799.25px;width:120px;text-align:center;top:337.91px;font-size:7.840px;color:#999;transform:scaleX(0.8929);transform-origin:50% 0">(17)</div>
<div style="position:absolute;left:971.5px;top:334px;width:60px;height:12.8px;background:#0b69a0;border-radius:2px"></div>
<svg style="left:973.5px;top:337.4px" width="6.4" height="6.2" viewBox="0 0 6.4 6.2"><ellipse cx="3.2" cy="2.5" rx="2.8" ry="2.1" fill="none" stroke="rgba(255,255,255,0.85)" stroke-width="0.75"/><path d="M1.2 4.2 L0.6 5.9 L2.6 4.6" fill="none" stroke="rgba(255,255,255,0.85)" stroke-width="0.7"/><path d="M1.7 2.1 H4.7 M1.7 3.0 H4.7" stroke="rgba(255,255,255,0.6)" stroke-width="0.5"/></svg>
<div class="a" id="t111" style="left:981.50px;top:337.00px;font-size:7.056px;color:#fff;transform:scaleX(0.9016);transform-origin:0 0">Commentaires</div>
<div style="position:absolute;left:1023px;top:146px;width:1px;height:21px;background:#f9f9f9"></div>
<div style="position:absolute;left:957.7px;top:146px;width:65.4px;height:21.1px;border:3px solid #e3141c"></div>
<div style="position:absolute;left:964.4px;top:184.3px;width:58.8px;height:23.6px;border:3px solid #e3141c"></div></body></html>
